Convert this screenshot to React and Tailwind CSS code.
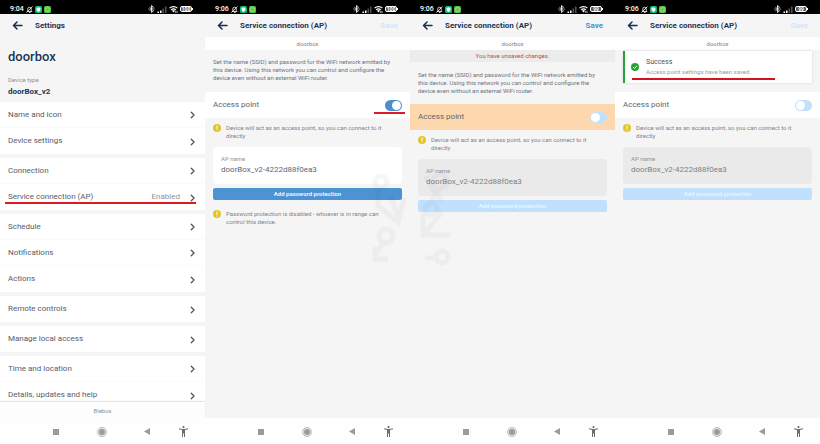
import React, { useId } from "react";

function StatusBar({ time, battery, wifi = true }) {
  return (
    <div className="flex h-3.5 shrink-0 items-center justify-between bg-black pt-1 pr-3 pl-2.5 text-[7px] leading-[8px] font-medium text-white">
      <div className="flex items-center gap-0.5">
        <span>{time}</span>
        <svg viewBox="0 0 14 14" className="size-[7px]" fill="none" stroke="#fff" strokeWidth="1.6">
          <path d="M2 11h10l-1.500-2V6a3.500 3.500 0 0 0-7 0v3zM6 13h3M1 13L13 1" />
        </svg>
        <svg viewBox="0 0 14 14" className="size-[7px]">
          <rect width="14" height="14" rx="3" fill="#10b877" />
          <path d="M7 2.500l4 1.600v3c0 2.300-1.600 3.800-4 4.700-2.400-.9-4-2.400-4-4.700v-3z" fill="#e9fff5" />
        </svg>
        <svg viewBox="0 0 14 14" className="size-[7px]">
          <rect width="14" height="14" rx="3" fill="#58c043" />
          <rect x="3.500" y="3.500" width="7" height="7" rx="2" fill="none" stroke="#a8eb98" strokeWidth="1.500" />
        </svg>
      </div>
      <div className="flex items-center gap-0.5">
        <svg viewBox="0 0 14 16" className="h-2 w-[7px]" fill="none" stroke="#fff" strokeWidth="1.700">
          <path d="M3 4.500l8 7L7 15V1l4 3.500-8 7" />
          <path d="M1 8h2M11 8h2" strokeWidth="2.200" />
        </svg>
        <svg viewBox="0 0 20 14" className="h-[7px] w-[10px]">
          <path d="M1 11h3v3H1zM6 9h3v5H6z" fill="#fff" />
          <path d="M11 5h3v9h-3zM16 1h3v13h-3z" fill="#555" />
        </svg>
        {wifi && (
          <svg viewBox="0 0 20 16" className="h-[7px] w-[9px]">
            <path d="M1 5a13 13 0 0 1 18 0M4.500 9a8 8 0 0 1 11 0" fill="none" stroke="#fff" strokeWidth="2.600" />
            <path d="M6.500 11a5 5 0 0 1 7 0L10 15z" fill="#fff" />
            <path d="M15 11v5M18 11v5" stroke="#fff" strokeWidth="1.500" />
          </svg>
        )}
        <span className="flex items-center">
          <span className="flex h-[6px] w-[12px] items-center justify-center rounded-[2px] border border-white bg-[#555] text-[5px] leading-[4px] font-bold">
            {battery}
          </span>
          <span className="h-0.5 w-px bg-white" />
        </span>
      </div>
    </div>
  );
}

function Header({ title, save }) {
  return (
    <header className="flex h-[23px] shrink-0 items-center bg-[#f5f5f5] pr-3 pl-3 text-[#1c3557]">
      <button aria-label="Back" className="mr-3 block">
        <svg viewBox="0 0 20 18" className="h-[9px] w-[11px]" fill="none" stroke="#142f55" strokeWidth="3" strokeLinecap="round" strokeLinejoin="round">
          <path d="M9 2L2 9l7 7M2.500 9H19" />
        </svg>
      </button>
      <h1 className="flex-1 text-[8px] leading-[10px] font-bold">{title}</h1>
      {save && (
        <button
          disabled={save === "disabled"}
          className="text-[8px] leading-[10px] font-bold text-[#4a90d3] disabled:text-[#cfe5fb]"
        >
          Save
        </button>
      )}
    </header>
  );
}

function NavBar() {
  return (
    <nav className="flex h-[26px] shrink-0 items-center justify-end bg-[#fefefe] pt-px pr-3">
      <div className="grid w-[144px] grid-cols-[48px_47px_35px_14px] items-center">
        <button aria-label="Recent apps" className="justify-self-start pl-1">
          <svg viewBox="0 0 6 6" className="size-[6px]">
            <rect width="6" height="6" fill="#9b9b9b" />
          </svg>
        </button>
        <button aria-label="Home" className="justify-self-start">
          <svg viewBox="0 0 20 20" className="size-[10px]">
            <circle cx="10" cy="10" r="9" fill="#e6e6e6" stroke="#aaa" strokeWidth="1.500" />
            <circle cx="10" cy="10" r="6" fill="#9b9b9b" />
          </svg>
        </button>
        <button aria-label="Back" className="justify-self-start">
          <svg viewBox="0 0 6 7" className="h-[7px] w-[6px]">
            <path d="M6 0v7L0 3.500z" fill="#9b9b9b" />
          </svg>
        </button>
        <button aria-label="Accessibility" className="justify-self-start">
          <svg viewBox="0 0 18 22" className="h-[11px] w-[9px]" fill="#6d6d6d">
            <circle cx="9" cy="2.200" r="2.200" />
            <path d="M0 4.500l6.500 1.500h5L18 4.500v2L12 8v14h-2v-7H8v7H6V8L0 6.500z" />
          </svg>
        </button>
      </div>
    </nav>
  );
}

function Row({ label, value, marked }) {
  return (
    <button className="relative flex h-[26px] w-full items-center px-2 text-left text-[8px] leading-[10px] text-[#565d69]">
      <span className="flex-1">{label}</span>
      {value && <span className="mr-2.5 text-[#8f9298]">{value}</span>}
      <svg viewBox="0 0 8 12" className="mt-px mr-0.5 h-[8px] w-[5px]" fill="none" stroke="#4b4f57" strokeWidth="2" strokeLinecap="round" strokeLinejoin="round">
        <path d="M2 1.500L6.500 6 2 10.500" />
      </svg>
      {marked && <span className="absolute right-[9px] bottom-[6px] left-[5px] h-0.5 bg-[#df1920]" />}
    </button>
  );
}

const groups = [
  [{ label: "Name and icon" }, { label: "Device settings" }],
  [{ label: "Connection" }, { label: "Service connection (AP)", value: "Enabled", marked: true }],
  [{ label: "Schedule" }, { label: "Notifications" }, { label: "Actions" }],
  [{ label: "Remote controls" }],
  [{ label: "Manage local access" }],
  [{ label: "Time and location" }, { label: "Details, updates and help" }],
];

function SettingsScreen() {
  return (
    <section className="flex min-h-0 flex-col bg-[#f5f5f5]">
      <StatusBar time="9:04" battery="100" />
      <Header title="Settings" />
      <div className="px-2 pt-3 pb-[5px]">
        <h2 className="text-[13px] leading-4 font-medium text-[#1c3557]">doorbox</h2>
        <p className="mt-[11px] text-[6px] leading-[8px] text-[#8f9298]">Device type</p>
        <p className="mt-0.5 text-[8px] leading-[11px] font-bold text-[#1c3557]">doorBox_v2</p>
      </div>
      <div className="flex min-h-0 flex-1 flex-col gap-1 overflow-hidden">
        {groups.map((rows) => (
          <div key={rows[0].label} className="shrink-0 divide-y divide-[#fafafa] bg-white">
            {rows.map((row) => (
              <Row key={row.label} {...row} />
            ))}
          </div>
        ))}
      </div>
      <footer className="relative h-4 shrink-0 bg-[#fdfdfd] text-center text-[6px] leading-[17px] text-[#8f9298] shadow-[0_-1px_1px_#e6e6e6]">
        Blebox
      </footer>
      <NavBar />
    </section>
  );
}

function Hint({ children }) {
  return (
    <div className="flex gap-1 px-2 text-[6px] leading-[8px] text-[#7f838a]">
      <svg viewBox="0 0 16 16" className="mr-px size-[8px] shrink-0">
        <circle cx="8" cy="8" r="8" fill="#e2c52c" />
        <path d="M8 3.500v5.500" stroke="#fff" strokeWidth="2" strokeLinecap="round" />
        <circle cx="8" cy="12" r="1.200" fill="#fff" />
      </svg>
      <p>{children}</p>
    </div>
  );
}

function Intro() {
  return (
    <p className="px-2 text-[6px] leading-[8px] text-[#6b7280]">
      Set the name (SSID) and password for the WiFi network emitted by
      <br />
      this device. Using this network you can control and configure the
      <br />
      device even without an external WiFi router.
    </p>
  );
}

function Toggle({ on, id }) {
  return (
    <span className="relative block h-[11px] w-[17px]">
      <input
        id={id}
        type="checkbox"
        role="switch"
        defaultChecked={on}
        className="peer absolute inset-0 size-full appearance-none rounded-full bg-[#c3e0fb] checked:bg-[#4d8fcd]"
      />
      <span className="pointer-events-none absolute top-px left-px size-[9px] rounded-full bg-white peer-checked:right-px peer-checked:left-auto" />
    </span>
  );
}

function ApForm({ on, dirty }) {
  const toggleId = useId();
  const nameId = useId();
  return (
    <>
      <div className={`relative flex h-[26px] items-center justify-between px-2 ${dirty ? "bg-[#fdd8ae]" : "bg-white"}`}>
        <label htmlFor={toggleId} className="text-[8px] leading-[10px] text-[#60656e]">
          Access point
        </label>
        <Toggle on={on} id={toggleId} />
        {on && <span className="absolute right-[5px] bottom-1 h-0.5 w-[31px] bg-[#df1920]" />}
      </div>
      <div className="pt-[6px]">
        <Hint>Device will act as an access point, so you can connect to it directly</Hint>
      </div>
      <div className="px-2 pt-[7px]">
        <div className={`h-[37px] rounded-sm px-2 pt-2 ${on ? "bg-white" : "bg-[#eaeaea]"}`}>
          <label htmlFor={nameId} className="block text-[6px] leading-[8px] text-[#8f9298]">
            AP name
          </label>
          <input
            id={nameId}
            disabled={!on}
            defaultValue="doorBox_v2-4222d88f0ea3"
            className="mt-px block w-full bg-transparent text-[8px] leading-[12px] text-[#5f6674] disabled:text-[#808080]"
          />
        </div>
        <button
          disabled={!on}
          className="mt-1 block h-3 w-full rounded-xs bg-[#4d92d2] text-[6px] leading-[12px] font-bold text-[#e9f3fc] disabled:bg-[#c0e0fe] disabled:text-[#e6f4ff]"
        >
          Add password protection
        </button>
      </div>
    </>
  );
}

function ApScreen({ battery, save, wifi, children }) {
  return (
    <section className="flex min-h-0 flex-col bg-[#f5f5f5]">
      <StatusBar time="9:06" battery={battery} wifi={wifi} />
      <Header title="Service connection (AP)" save={save} />
      <p className="h-[13px] shrink-0 bg-[#fefefe] text-center text-[6px] leading-[13px] text-[#7f838a]">doorbox</p>
      <div className="flex-1">{children}</div>
      <NavBar />
    </section>
  );
}

function SuccessToast() {
  return (
    <div role="status" className="mx-2 mt-px flex h-8 items-center border-l-2 border-[#28a233] bg-white pl-1.5 shadow-[0_0_2px_#cfcfcf]">
      <svg viewBox="0 0 16 16" className="mr-[7px] size-[8px]">
        <circle cx="8" cy="8" r="8" fill="#28a233" />
        <path d="M4.500 8.300l2.500 2.500 4.700-5" fill="none" stroke="#fff" strokeWidth="2" />
      </svg>
      <div className="relative pb-px">
        <p className="text-[7px] leading-[10px] text-[#4b5563]">Success</p>
        <p className="text-[6px] leading-[10px] text-[#9a9da3]">Access point settings have been saved.</p>
        <span className="absolute -right-6 -bottom-0.5 -left-3.5 h-0.5 bg-[#d4141c]" />
      </div>
    </div>
  );
}

function Watermark() {
  return (
    <svg
      aria-hidden="true"
      viewBox="0 0 90 125"
      className="pointer-events-none absolute top-[150px] left-1/2 h-[125px] w-[90px] -translate-x-1/2 opacity-[0.04]"
      fill="none"
      stroke="#404050"
      strokeWidth="5"
    >
      <circle cx="16" cy="32" r="6" />
      <path d="M13 38v18l20 16 6-24M25 45l9 24" />
      <circle cx="21" cy="86" r="7" />
      <path d="M18 93L10 106M10 97v12h13" />
      <circle cx="75" cy="31" r="7" />
      <path d="M61 26l6 13 10 12M75 38L62 58" />
      <circle cx="66" cy="59" r="6" />
      <path d="M58 63v22h27M59 84l18-22" />
      <circle cx="77" cy="107" r="6" />
      <path d="M60 108h11" />
    </svg>
  );
}

export default function App() {
  return (
    <main className="relative grid h-screen grid-cols-4 overflow-hidden bg-white font-[Roboto,sans-serif]">
      <SettingsScreen />
      <ApScreen battery="100" save="disabled">
        <div className="pt-2 pb-[10px]">
          <Intro />
        </div>
        <ApForm on />
        <div className="pt-[10px]">
          <Hint>
            Password protection is disabled - whoever is in range can
            <br />
            control this device.
          </Hint>
        </div>
      </ApScreen>
      <ApScreen battery="99" save="enabled">
        <p className="h-3 bg-[#ececec] text-center text-[6px] leading-[12px] text-[#c0494a]">You have unsaved changes.</p>
        <div className="pt-[9px] pb-[9px]">
          <Intro />
        </div>
        <ApForm dirty />
      </ApScreen>
      <ApScreen battery="99" save="disabled" wifi={false}>
        <div className="pb-[9px]">
          <SuccessToast />
        </div>
        <ApForm />
      </ApScreen>
      <Watermark />
    </main>
  );
}
